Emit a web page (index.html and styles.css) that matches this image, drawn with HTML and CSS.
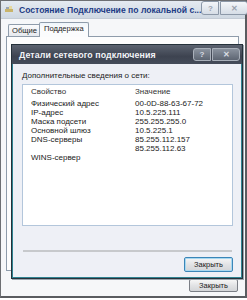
FILE: index.html
```html
<!DOCTYPE html>
<html>
<head>
<meta charset="utf-8">
<link rel="stylesheet" href="styles.css">
</head>
<body>
<div class="window">
  <div class="titlebar">
    <span class="app-icon">
      <svg width="8" height="7" viewBox="0 0 8 7"><rect x="0" y="3" width="8" height="3" fill="#c9b46a"/><rect x="1" y="1" width="3" height="2" fill="#9aa6b4"/><rect x="4" y="0" width="3" height="3" fill="#e6d9a0"/></svg>
    </span>
    <span class="title">Состояние Подключение по локальной с...</span>
    <div class="caption-buttons">
      <span class="cbtn help">?</span>
      <span class="cbtn close">✕</span>
    </div>
  </div>
  <div class="client">
    <div class="tabs">
      <div class="tab">Общие</div>
      <div class="tab active">Поддержка</div>
    </div>
    <div class="panel">
      <span class="panel-icon"></span>
    </div>
    <div class="footer">
      <button class="btn">Закрыть</button>
    </div>
  </div>

  <div class="dialog">
    <div class="dlg-titlebar">
      <span class="dlg-title">Детали сетевого подключения</span>
      <div class="caption-buttons dark">
        <span class="cbtn help">?</span>
        <span class="cbtn close">✕</span>
      </div>
    </div>
    <div class="dlg-body">
      <div class="label">Дополнительные сведения о сети:</div>
      <div class="listbox">
        <div class="list-head">
          <span>Свойство</span><span>Значение</span>
        </div>
        <div class="rows">
          <span>Физический адрес</span><span>00-0D-88-63-67-72</span>
          <span>IP-адрес</span><span>10.5.225.111</span>
          <span>Маска подсети</span><span>255.255.255.0</span>
          <span>Основной шлюз</span><span>10.5.225.1</span>
          <span>DNS-серверы</span><span>85.255.112.157</span>
          <span></span><span>85.255.112.63</span>
          <span>WINS-сервер</span><span></span>
        </div>
      </div>
      <div class="separator"></div>
      <div class="dlg-footer">
        <button class="btn default">Закрыть</button>
      </div>
    </div>
  </div>
</div>
</body>
</html>
```

FILE: styles.css
```css
* { box-sizing: border-box; }
html, body { margin: 0; padding: 0; background: #ffffff; }
body {
  font-family: "Liberation Sans", Arial, sans-serif;
  font-size: 8px;
  color: #222;
}
.window {
  position: relative;
  width: 247px;
  height: 298px;
  border: 1px solid #6d6f73;
  border-right: 2px solid #5a5c60;
  border-bottom: 2px solid #5a5c60;
  background: #f6f7f9;
  display: flex;
  flex-direction: column;
}
.titlebar {
  height: 18px;
  display: flex;
  align-items: center;
  padding-left: 4px;
  background: linear-gradient(#e4eaf1, #cfd8e2);
  border-bottom: 1px solid #c4ccd6;
}
.app-icon { width: 8px; height: 7px; display: flex; margin-right: 6px; }
.title {
  font-weight: bold;
  font-size: 8.6px;
  color: #1d3b85;
  white-space: nowrap;
  flex: 1;
}
.caption-buttons { display: flex; gap: 1px; margin-right: 5px; margin-top: -3px; }
.cbtn {
  height: 14px;
  display: flex;
  align-items: center;
  justify-content: center;
  border: 1px solid #8c98a8;
  border-radius: 3px;
  background: linear-gradient(#f4f6f9, #d6dde6);
  color: #9aa2ad;
  font-size: 8px;
  font-weight: bold;
}
.cbtn.help { width: 18px; border-radius: 3px 0 0 3px; }
.cbtn.close { width: 28px; border-radius: 0 3px 3px 0; font-size: 8px; }
.caption-buttons.dark { margin-top: 0; margin-right: 2px; }
.caption-buttons.dark .cbtn {
  height: 13px;
  border-color: #a9b0ba;
  background: linear-gradient(#8a929e, #5d6572);
  color: #d9dde3;
}
.client {
  flex: 1;
  display: flex;
  flex-direction: column;
  padding: 2px 6px 0 5px;
}
.tabs { display: flex; align-items: flex-end; padding-left: 2px; height: 15px; }
.tab {
  height: 12px;
  padding: 0 2px 0 3px;
  line-height: 11px;
  font-size: 7.6px;
  border: 1px solid #8f9cab;
  border-bottom: none;
  border-right: none;
  border-radius: 2px 0 0 0;
  background: linear-gradient(#fbfbfc, #e6e9ee);
  color: #222;
  white-space: nowrap;
}
.tab.active {
  height: 15px;
  width: 50px;
  margin-bottom: -1px;
  border-right: 1px solid #8f9cab;
  border-radius: 2px 2px 0 0;
  background: linear-gradient(#eef4fa, #fbfcfd 40%);
  position: relative;
  z-index: 1;
  line-height: 12px;
  padding-left: 4px;
}
.panel {
  height: 235px;
  border: 1px solid #8f9cab;
  background: #fdfdfd;
  position: relative;
}
.panel-icon {
  display: block;
  width: 3px; height: 3px;
  border-radius: 50%;
  background: #d9a08e;
  margin: 7px 0 0 17px;
}
.footer { display: flex; justify-content: flex-end; padding-top: 8px; padding-right: 1px; }
.btn {
  font-family: "Liberation Sans", Arial, sans-serif;
  font-size: 7.5px;
  color: #1a1a1a;
  height: 13px;
  width: 49px;
  padding: 0;
  border: 1px solid #7b7f86;
  border-radius: 2px;
  background: linear-gradient(#f6f6f6, #e2e3e5 50%, #d3d5d8);
}
.btn.default {
  border-color: #3b86b8;
  box-shadow: inset 0 0 0 1px #a8d8f0;
  height: 15px;
}
.dialog {
  position: absolute;
  left: 10px;
  top: 43px;
  width: 232px;
  height: 235px;
  border: 1px solid #25313a;
  box-shadow: inset 0 0 0 1px #2f8391, 1px 1px 0 #9aa4ad;
  background: #eef0f6;
  display: flex;
  flex-direction: column;
}
.dlg-titlebar {
  height: 19px;
  display: flex;
  align-items: center;
  padding-left: 7px;
  background: linear-gradient(#5c6370, #3d4350 60%, #454c5a);
}
.dlg-title {
  flex: 1;
  color: #f2f4f7;
  font-size: 8.8px;
  font-weight: bold;
  letter-spacing: 0.1px;
}
.dlg-body {
  flex: 1;
  padding: 7px 8px 0 9px;
  border-left: 1px solid #2f8391;
  border-right: 1px solid #2f8391;
  border-bottom: 1px solid #2f8391;
  display: flex;
  flex-direction: column;
}
.label { line-height: 10px; color: #222; }
.listbox {
  margin-top: 3px;
  height: 142px;
  background: #fff;
  border: 1px solid #b3c6db;
  padding: 2px 0 0 8px;
}
.list-head, .rows {
  display: grid;
  grid-template-columns: 104px 1fr;
}
.list-head { line-height: 10px; color: #333; }
.rows { margin-top: 2px; line-height: 9px; }
.separator {
  margin-top: 24px;
  height: 2px;
  background: #c7c9cc;
  margin-left: 1px;
  margin-right: 1px;
}
.dlg-footer { display: flex; justify-content: flex-end; padding-top: 5px; padding-right: 0; }
```
